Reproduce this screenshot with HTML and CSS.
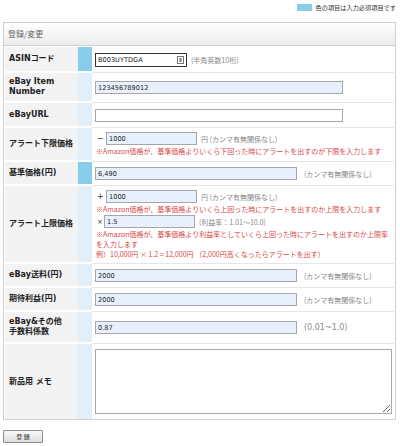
FILE: index.html
```html
<!DOCTYPE html>
<html lang="ja">
<head>
<meta charset="utf-8">
<link rel="stylesheet" href="styles.css">
</head>
<body>
<div class="legend"><span class="swatch"></span><span class="legend-text">色の項目は入力必須項目です</span></div>
<div class="panel">
  <div class="panel-head">登録/変更</div>
  <div class="form">
    <div class="row">
      <div class="lbl">ASINコード</div><div class="mark req"></div>
      <div class="cell cell-top"><div class="line"><span class="asin-wrap"><input class="in in-asin" type="text" value="B003UYTDGA"><svg class="asin-icon" width="7" height="8" viewBox="0 0 7 8"><rect x="0.5" y="0.5" width="6" height="7" fill="#fff" stroke="#777"/><rect x="2.5" y="2" width="2" height="4" fill="#777"/></svg></span><span class="hint">(半角英数10桁)</span></div></div>
    </div>
    <div class="row">
      <div class="lbl lbl-two">eBay Item<br>Number</div><div class="mark"></div>
      <div class="cell"><div class="line"><input class="in in-long" type="text" value="123456789012"></div></div>
    </div>
    <div class="row">
      <div class="lbl">eBayURL</div><div class="mark"></div>
      <div class="cell cell-top"><div class="line"><input class="in in-long in-empty" type="text" value=""></div></div>
    </div>
    <div class="row">
      <div class="lbl">アラート下限価格</div><div class="mark"></div>
      <div class="cell cell-lower"><div class="line"><span class="sign">−</span><input class="in in-small" type="text" value="1000"><span class="hint">円 (カンマ有無関係なし)</span></div><p class="note">※Amazon価格が、基準価格よりいくら下回った時にアラートを出すのが下限を入力します</p></div>
    </div>
    <div class="row">
      <div class="lbl">基準価格(円)</div><div class="mark req"></div>
      <div class="cell"><div class="line"><input class="in in-mid" type="text" value="6,490"><span class="hint hint-wide">(カンマ有無関係なし)</span></div></div>
    </div>
    <div class="row">
      <div class="lbl">アラート上限価格</div><div class="mark"></div>
      <div class="cell cell-tight"><div class="line"><span class="sign">+</span><input class="in in-small" type="text" value="1000"><span class="hint">円 (カンマ有無関係なし)</span></div><p class="note">※Amazon価格が、基準価格よりいくら上回った時にアラートを出すのか上限を入力します</p><div class="line line-gap"><span class="sign sign-x">×</span><input class="in in-small" type="text" value="1.5"><span class="hint">(利益率：1.01〜10.0)</span></div><p class="note">※Amazon価格が、基準価格より利益率としていくら上回った時にアラートを出すのか上限率<br>を入力します<br>例）10,000円 × 1.2 = 12,000円 （2,000円高くなったらアラートを出す）</p></div>
    </div>
    <div class="row">
      <div class="lbl">eBay送料(円)</div><div class="mark"></div>
      <div class="cell"><div class="line"><input class="in in-mid" type="text" value="2000"><span class="hint hint-wide">(カンマ有無関係なし)</span></div></div>
    </div>
    <div class="row">
      <div class="lbl">期待利益(円)</div><div class="mark"></div>
      <div class="cell"><div class="line"><input class="in in-mid" type="text" value="2000"><span class="hint hint-wide">(カンマ有無関係なし)</span></div></div>
    </div>
    <div class="row">
      <div class="lbl lbl-two lbl-fee">eBay&amp;その他<br>手数料係数</div><div class="mark"></div>
      <div class="cell"><div class="line"><input class="in in-mid" type="text" value="0.87"><span class="hint hint-big">(0.01~1.0)</span></div></div>
    </div>
    <div class="row row-last">
      <div class="lbl">新品用 メモ</div><div class="mark"></div>
      <div class="cell"><textarea class="memo"></textarea></div>
    </div>
  </div>
</div>
<div class="actions"><button class="btn" type="button">登 録</button></div>
</body>
</html>
```
FILE: styles.css
```css
html, body {
  margin: 0;
  padding: 0;
  background: #fff;
}
body {
  width: 400px;
  font-family: "DejaVu Sans", "Noto Sans CJK JP", sans-serif;
  color: #222;
}
.legend {
  height: 22px;
  box-sizing: border-box;
  padding: 4px 4px 0 0;
  display: flex;
  justify-content: flex-end;
  align-items: flex-start;
  gap: 4px;
}
.swatch {
  width: 15px;
  height: 7px;
  background: #87ceeb;
}
.legend-text {
  font-family: "Noto Sans CJK JP", sans-serif;
  font-size: 6.2px;
  line-height: 8px;
  color: #333;
}
.panel {
  margin: 0 4px 0 3px;
  border: 1px solid #cfcfcf;
}
.panel-head {
  height: 22px;
  line-height: 22px;
  padding-left: 4px;
  font-family: "Noto Sans CJK JP", sans-serif;
  font-size: 8px;
  color: #666;
  background: linear-gradient(#ffffff, #ececec);
  border-bottom: 1px solid #cfcfcf;
}
.form {
  padding: 1px 1px 0 1px;
}
.row {
  display: grid;
  grid-template-columns: 73px 14px 1fr;
}
.lbl {
  background: #f3f3f3;
  border-bottom: 2px solid #fff;
  padding: 0 4px;
  display: flex;
  align-items: center;
  font-size: 8px;
  line-height: 10px;
  font-weight: bold;
  color: #222;
}
.lbl-two {
  padding-top: 4px;
  padding-bottom: 4px;
}
.lbl-fee {
  padding-top: 5px;
  padding-bottom: 5px;
}
.mark {
  background: #e1effa;
  border-bottom: 2px solid #fff;
}
.mark.req {
  background: #87ceeb;
}
.cell {
  padding: 5px 3px 5px 3px;
  border-bottom: 1px solid #e6e6e6;
  display: flex;
  flex-direction: column;
  justify-content: center;
}
.cell-top {
  padding-top: 6px;
}
.row-last .cell {
  border-bottom: none;
}
.row-last .lbl, .row-last .mark {
  border-bottom: none;
}
.cell-tight {
  padding-top: 4px;
  padding-bottom: 4px;
}
.cell-lower {
  padding-top: 4px;
  padding-bottom: 5px;
}
.line {
  display: flex;
  align-items: center;
}
.line-gap {
  margin-top: 1px;
}
.in {
  box-sizing: border-box;
  height: 13px;
  margin: 0;
  padding: 0 2px;
  border: 1px solid #a7a7a7;
  background: #e8f0fe;
  font-family: "DejaVu Sans", sans-serif;
  font-size: 6.6px;
  color: #222;
  outline: none;
}
.in-empty {
  background: #fff;
}
.in-long {
  width: 248px;
}
.in-mid {
  width: 202px;
}
.in-small {
  width: 91px;
}
.asin-wrap {
  position: relative;
  display: inline-flex;
}
.in-asin {
  width: 92px;
  height: 14px;
  background: #fff;
  border: 1px solid #333;
}
.asin-icon {
  position: absolute;
  right: 3px;
  top: 3px;
}
.sign {
  width: 11px;
  padding-left: 2px;
  box-sizing: border-box;
  font-size: 8px;
  line-height: 10px;
  color: #333;
}
.sign-x {
  width: 9px;
  font-size: 7px;
}
.hint {
  margin-left: 4px;
  font-family: "Noto Sans CJK JP", sans-serif;
  font-size: 7px;
  line-height: 10px;
  color: #888;
  white-space: nowrap;
}
.hint-wide {
  margin-left: 7px;
}
.hint-big {
  margin-left: 7px;
  font-family: "DejaVu Sans", sans-serif;
  font-size: 8px;
}
.note {
  margin: 1px 0 0 1px;
  font-family: "Noto Sans CJK JP", sans-serif;
  font-size: 7px;
  line-height: 10px;
  color: #d94848;
}
.memo {
  display: block;
  box-sizing: border-box;
  width: 297px;
  height: 65px;
  margin: 0;
  border: 1px solid #a7a7a7;
  background: #fff;
}
.actions {
  display: flex;
  padding: 10px 0 0 3px;
}
.btn {
  box-sizing: border-box;
  width: 40px;
  height: 13px;
  padding: 0;
  border: 1px solid #8c8c8c;
  border-radius: 1px;
  background: linear-gradient(#fafafa, #dcdcdc);
  font-family: "Noto Sans CJK JP", sans-serif;
  font-size: 6px;
  line-height: 11px;
  color: #333;
}
```
